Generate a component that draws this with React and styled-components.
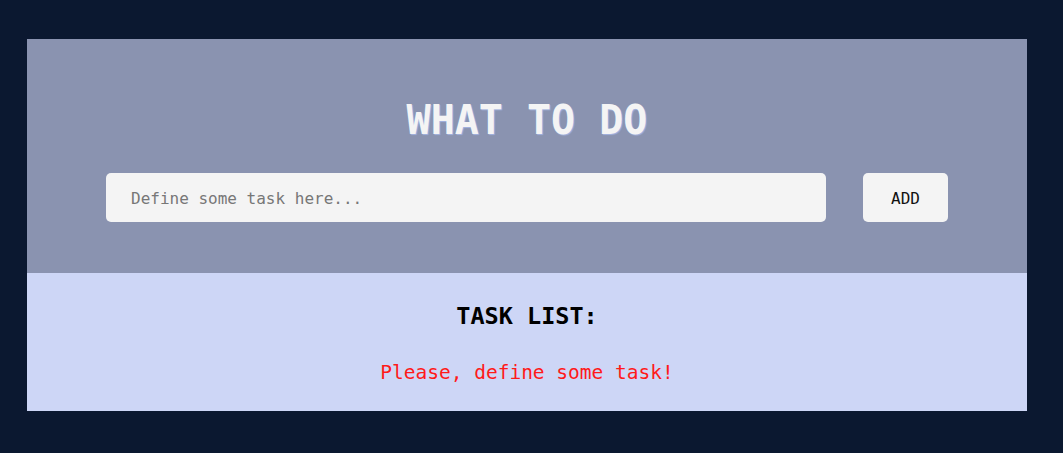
import React, {useState} from 'react';
import styled, {createGlobalStyle} from 'styled-components';

const GlobalStyle = createGlobalStyle`
  body {
    margin: 0;
    background: #0b1830;
    font-family: "DejaVu Sans Mono", "Liberation Mono", monospace;
  }
`;

const Page = styled.div`
  min-height: 453px;
  padding: 39px 36px 43px 27px;
  box-sizing: border-box;
`;

const Card = styled.div`
  width: 1000px;
  display: flex;
  flex-direction: column;
`;

const Header = styled.div`
  background: #8a93b0;
  padding: 61px 0 51px;
  display: flex;
  flex-direction: column;
  align-items: center;
  gap: 33px;
`;

const Title = styled.h1`
  margin: 0;
  font-size: 40px;
  line-height: 40px;
  font-weight: bold;
  color: #f4f4f4;
  text-shadow: 1px 1px 1px rgba(180, 200, 255, 0.6);
`;

const Form = styled.form`
  display: flex;
  gap: 37px;
`;

const Input = styled.input`
  width: 720px;
  height: 49px;
  box-sizing: border-box;
  border: none;
  border-radius: 5px;
  background: #f4f4f4;
  padding: 2px 25px 0;
  font-family: inherit;
  font-size: 16px;
  color: #222;
  outline: none;

  &::placeholder {
    color: #777;
  }
`;

const AddButton = styled.button`
  width: 85px;
  height: 49px;
  padding-top: 2px;
  border: none;
  border-radius: 5px;
  background: #f4f4f4;
  font-family: inherit;
  font-size: 16px;
  color: #111;
  cursor: pointer;
`;

const ListSection = styled.div`
  background: #cdd6f6;
  padding: 31px 0 28px;
  display: flex;
  flex-direction: column;
  align-items: center;
  gap: 35px;
`;

const ListTitle = styled.h2`
  margin: 0;
  font-size: 23.5px;
  line-height: 24px;
  font-weight: bold;
  color: #000;
`;

const Message = styled.p`
  margin: 0;
  font-size: 19.5px;
  line-height: 20px;
  color: ${p => p.color || '#000'};
`;

const App = () => {
    const [value, setValue] = useState('');

    return (
        <Page>
            <GlobalStyle/>
            <Card>
                <Header>
                    <Title>WHAT TO DO</Title>
                    <Form onSubmit={e => e.preventDefault()}>
                        <Input
                            placeholder="Define some task here..."
                            value={value}
                            onChange={e => setValue(e.target.value)}
                        />
                        <AddButton type="submit">ADD</AddButton>
                    </Form>
                </Header>
                <ListSection>
                    <ListTitle>TASK LIST:</ListTitle>
                    <Message color="#ff1a1a">Please, define some task!</Message>
                </ListSection>
            </Card>
        </Page>
    );
};

export default App;
